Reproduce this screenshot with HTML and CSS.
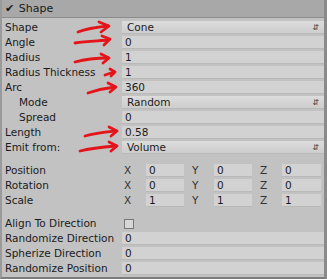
FILE: index.html
```html
<!DOCTYPE html>
<html lang="en">
<head>
  <meta charset="UTF-8" />
  <title>Shape</title>
  <link rel="stylesheet" href="styles.css">
</head>
<body>
  <div class="panel">
    <div class="header"><span class="tick">&#10004;</span> Shape</div>

    <div class="section">
      <div class="row"><span class="label">Shape</span><span class="field drop">Cone<i class="arr">&#8693;</i></span></div>
      <div class="row"><span class="label">Angle</span><span class="field">0</span></div>
      <div class="row"><span class="label">Radius</span><span class="field">1</span></div>
      <div class="row"><span class="label">Radius Thickness</span><span class="field">1</span></div>
      <div class="row"><span class="label">Arc</span><span class="field">360</span></div>
      <div class="row"><span class="label sub">Mode</span><span class="field drop">Random<i class="arr">&#8693;</i></span></div>
      <div class="row"><span class="label sub">Spread</span><span class="field">0</span></div>
      <div class="row"><span class="label">Length</span><span class="field">0.58</span></div>
      <div class="row"><span class="label">Emit from:</span><span class="field drop">Volume<i class="arr">&#8693;</i></span></div>
    </div>

    <div class="section">
      <div class="row"><span class="label">Position</span>
        <span class="vec"><span class="axis">X</span><span class="field">0</span><span class="axis">Y</span><span class="field">0</span><span class="axis">Z</span><span class="field">0</span></span></div>
      <div class="row"><span class="label">Rotation</span>
        <span class="vec"><span class="axis">X</span><span class="field">0</span><span class="axis">Y</span><span class="field">0</span><span class="axis">Z</span><span class="field">0</span></span></div>
      <div class="row"><span class="label">Scale</span>
        <span class="vec"><span class="axis">X</span><span class="field">1</span><span class="axis">Y</span><span class="field">1</span><span class="axis">Z</span><span class="field">1</span></span></div>
    </div>

    <div class="section last">
      <div class="row"><span class="label">Align To Direction</span><span class="check"><span class="box"></span></span></div>
      <div class="row"><span class="label">Randomize Direction</span><span class="field">0</span></div>
      <div class="row"><span class="label">Spherize Direction</span><span class="field">0</span></div>
      <div class="row"><span class="label">Randomize Position</span><span class="field">0</span></div>
    </div>

    <!-- hand drawn arrows on top of the screenshot -->
    <svg class="marks" width="327" height="279" viewBox="0 0 327 279">
      <g fill="none" stroke="#e3141a" stroke-width="2.8" stroke-linecap="round" stroke-linejoin="round">
        <path d="M78 32 C88 28 98 27 108 26" /><path d="M99 22 L109 26 L101 32" />
        <path d="M75 43 C86 41 98 41 109 40" /><path d="M102 36 L110 39 L104 45" />
        <path d="M75 62 C86 59 97 58 108 58" /><path d="M101 54 L109 58 L103 63" />
        <path d="M105 75 C108 74 111 73 114 72" /><path d="M110 69 L115 72 L111 76" />
        <path d="M88 93 C97 90 106 88 115 87" /><path d="M108 83 L116 87 L110 92" />
        <path d="M85 136 C95 133 106 132 116 131" /><path d="M109 127 L117 131 L111 136" />
        <path d="M80 151 C92 148 104 147 116 146" /><path d="M109 142 L117 146 L111 151" />
      </g>
    </svg>
  </div>
</body>
</html>
```

FILE: styles.css
```css
body {
  margin: 0;
  font-family: "DejaVu Sans", sans-serif;
  font-size: 10.5px;
  color: #1b1b1b;
  background: #c2c2c2;
}
.panel {
  position: relative;
  width: 327px;
  height: 279px;
  box-sizing: border-box;
  background: #c2c2c2;
  border-left: 2px solid #9a9a9a;
  border-right: 3px solid #8a8a8a;
  border-bottom: 2px solid #7c7c7c;
  overflow: hidden;
}
.header {
  height: 17px;
  line-height: 17px;
  padding-left: 3px;
  background: #a8a8a8;
  border-bottom: 1px solid #8c8c8c;
  font-size: 11px;
}
.tick {
  font-size: 11px;
  margin-right: 1px;
}
.section {
  padding-top: 2px;
  margin-bottom: 6px;
}
.row {
  display: flex;
  height: 15px;
  align-items: stretch;
}
.label {
  width: 117px;
  padding-left: 3px;
  line-height: 15px;
  white-space: nowrap;
  flex-shrink: 0;
}
.label.sub {
  padding-left: 17px;
  width: 103px;
}
.field {
  flex: 1;
  margin: 1px 0 1px 0;
  padding-left: 3px;
  line-height: 13px;
  background: #d2d2d2;
  border-bottom: 1px solid #b9b9b9;
  height: 12px;
  position: relative;
}
.drop {
  background: linear-gradient(#dcdcdc, #cdcdcd);
  padding-left: 5px;
}
.arr {
  position: absolute;
  right: 5px;
  top: 0;
  font-style: normal;
  font-size: 8px;
  color: #444;
}
.vec {
  flex: 1;
  display: flex;
}
.vec .axis {
  width: 22px;
  padding-left: 2px;
  line-height: 15px;
  color: #333;
}
.vec .field {
  flex: none;
  width: 35px;
  margin-right: 6px;
}
.vec .field:last-child {
  margin-right: 0;
  width: 36px;
}
.check {
  flex: 1;
  padding-left: 2px;
  display: flex;
  align-items: center;
}
.box {
  width: 8px;
  height: 8px;
  border: 1px solid #777;
  background: #d6d6d6;
}
.marks {
  position: absolute;
  left: -2px;
  top: 0;
  pointer-events: none;
}
```
